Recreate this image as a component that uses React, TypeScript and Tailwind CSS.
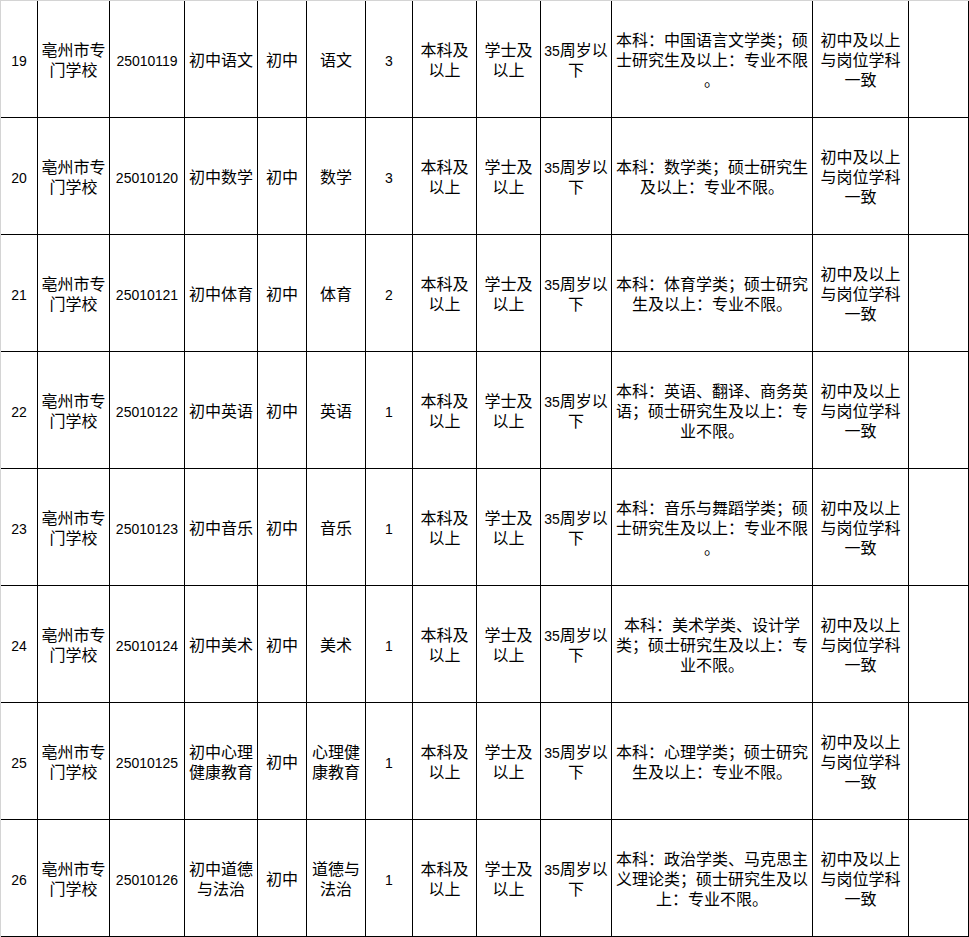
import React from 'react';

// One row of the recruitment table
interface Row {
  no: string;
  school: string[];
  code: string;
  post: string[];
  level: string;
  subject: string[];
  count: string;
  major: string[];
}

const rows: Row[] = [
  { no: '19', school: ['亳州市专', '门学校'], code: '25010119', post: ['初中语文'], level: '初中', subject: ['语文'], count: '3', major: ['本科：中国语言文学类；硕', '士研究生及以上：专业不限', '。'] },
  { no: '20', school: ['亳州市专', '门学校'], code: '25010120', post: ['初中数学'], level: '初中', subject: ['数学'], count: '3', major: ['本科：数学类；硕士研究生', '及以上：专业不限。'] },
  { no: '21', school: ['亳州市专', '门学校'], code: '25010121', post: ['初中体育'], level: '初中', subject: ['体育'], count: '2', major: ['本科：体育学类；硕士研究', '生及以上：专业不限。'] },
  { no: '22', school: ['亳州市专', '门学校'], code: '25010122', post: ['初中英语'], level: '初中', subject: ['英语'], count: '1', major: ['本科：英语、翻译、商务英', '语；硕士研究生及以上：专', '业不限。'] },
  { no: '23', school: ['亳州市专', '门学校'], code: '25010123', post: ['初中音乐'], level: '初中', subject: ['音乐'], count: '1', major: ['本科：音乐与舞蹈学类；硕', '士研究生及以上：专业不限', '。'] },
  { no: '24', school: ['亳州市专', '门学校'], code: '25010124', post: ['初中美术'], level: '初中', subject: ['美术'], count: '1', major: ['本科：美术学类、设计学', '类；硕士研究生及以上：专', '业不限。'] },
  { no: '25', school: ['亳州市专', '门学校'], code: '25010125', post: ['初中心理', '健康教育'], level: '初中', subject: ['心理健', '康教育'], count: '1', major: ['本科：心理学类；硕士研究', '生及以上：专业不限。'] },
  { no: '26', school: ['亳州市专', '门学校'], code: '25010126', post: ['初中道德', '与法治'], level: '初中', subject: ['道德与', '法治'], count: '1', major: ['本科：政治学类、马克思主', '义理论类；硕士研究生及以', '上：专业不限。'] },
];

function Cell({ lines, num }: { lines: React.ReactNode[]; num?: boolean }) {
  return (
    <div className="h-[117px] border-r border-b border-black flex flex-col items-center justify-center text-center pt-[3px]">
      {lines.map((l, i) => (
        <div key={i} className={`whitespace-nowrap leading-[20px] ${num ? 'text-[14px]' : 'text-[16px]'}`}>
          {l}
        </div>
      ))}
    </div>
  );
}

export default function App() {
  return (
    <div
      className="w-[969px] bg-white text-black border-t border-l border-[#d4d4d4] grid grid-cols-[37px_72px_75px_73px_49px_59px_47px_64px_64px_71px_201px_96px_60px]"
      style={{ fontFamily: '"Liberation Sans", "Noto Sans CJK SC", sans-serif' }}
    >
      {rows.map((r) => (
        <React.Fragment key={r.no}>
          <Cell lines={[r.no]} num />
          <Cell lines={r.school} />
          <Cell lines={[r.code]} num />
          <Cell lines={r.post} />
          <Cell lines={[r.level]} />
          <Cell lines={r.subject} />
          <Cell lines={[r.count]} num />
          <Cell lines={['本科及', '以上']} />
          <Cell lines={['学士及', '以上']} />
          <Cell lines={[<><span className="text-[14px]">35</span>周岁以</>, '下']} />
          <Cell lines={r.major} />
          <Cell lines={['初中及以上', '与岗位学科', '一致']} />
          <Cell lines={[]} />
        </React.Fragment>
      ))}
    </div>
  );
}
